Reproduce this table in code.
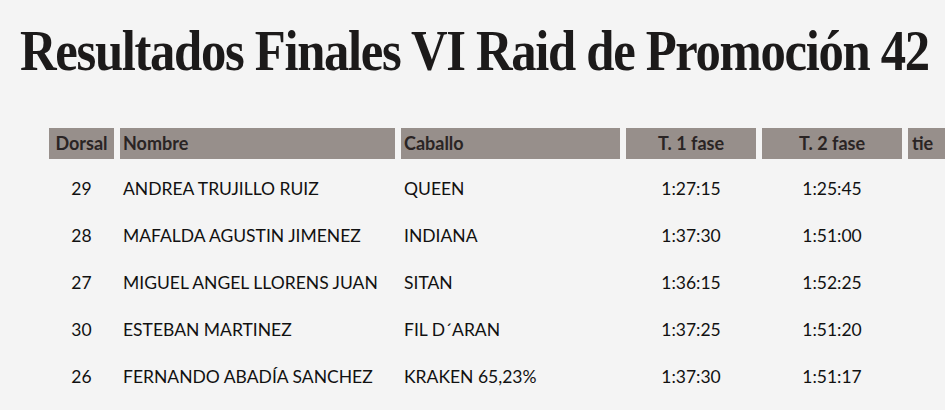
import React from 'react'

const rows = [
  { dorsal: '29', nombre: 'ANDREA TRUJILLO RUIZ', caballo: 'QUEEN', t1: '1:27:15', t2: '1:25:45' },
  { dorsal: '28', nombre: 'MAFALDA AGUSTIN JIMENEZ', caballo: 'INDIANA', t1: '1:37:30', t2: '1:51:00' },
  { dorsal: '27', nombre: 'MIGUEL ANGEL LLORENS JUAN', caballo: 'SITAN', t1: '1:36:15', t2: '1:52:25' },
  { dorsal: '30', nombre: 'ESTEBAN MARTINEZ', caballo: 'FIL D´ARAN', t1: '1:37:25', t2: '1:51:20' },
  { dorsal: '26', nombre: 'FERNANDO ABADÍA SANCHEZ', caballo: 'KRAKEN 65,23%', t1: '1:37:30', t2: '1:51:17' }
]

const cols = 'grid grid-cols-[65px_275px_219px_130px_140px_100px] gap-x-[6px]'

export default function App() {
  return (
    <div className="w-[945px] h-[410px] overflow-hidden bg-[#f4f4f4] text-[#111]" style={{ fontFamily: 'Lato, "Open Sans", sans-serif' }}>
      <div className="pl-[20px] pt-[21px] h-[80px]">
        <h1 className="inline-block origin-left scale-x-[0.89] whitespace-nowrap text-[57px] leading-[60px] font-bold text-[#1c1a1a] tracking-[-1.5px]" style={{ fontFamily: '"Liberation Serif", serif' }}>
          Resultados Finales VI Raid de Promoción 42
        </h1>
      </div>

      <div className="pl-[49px] pt-[48px]">
        <div className={`${cols} h-[31px] text-[18px] font-bold text-[#2a2424] leading-[31px]`}>
          <div className="bg-[#978f8b] text-center">Dorsal</div>
          <div className="bg-[#978f8b] pl-[3px]">Nombre</div>
          <div className="bg-[#978f8b] pl-[3px]">Caballo</div>
          <div className="bg-[#978f8b] text-center">T. 1 fase</div>
          <div className="bg-[#978f8b] text-center">T. 2 fase</div>
          <div className="bg-[#978f8b] pl-[4px] overflow-hidden">tie</div>
        </div>

        <div className="pt-[7px]">
          {rows.map(r => (
            <div key={r.dorsal} className={`${cols} h-[47px] items-center text-[17.5px]`}>
              <div className="text-center">{r.dorsal}</div>
              <div className="pl-[3px] whitespace-nowrap">{r.nombre}</div>
              <div className="pl-[3px] whitespace-nowrap">{r.caballo}</div>
              <div className="text-center">{r.t1}</div>
              <div className="text-center">{r.t2}</div>
              <div />
            </div>
          ))}
        </div>
      </div>
    </div>
  )
}
